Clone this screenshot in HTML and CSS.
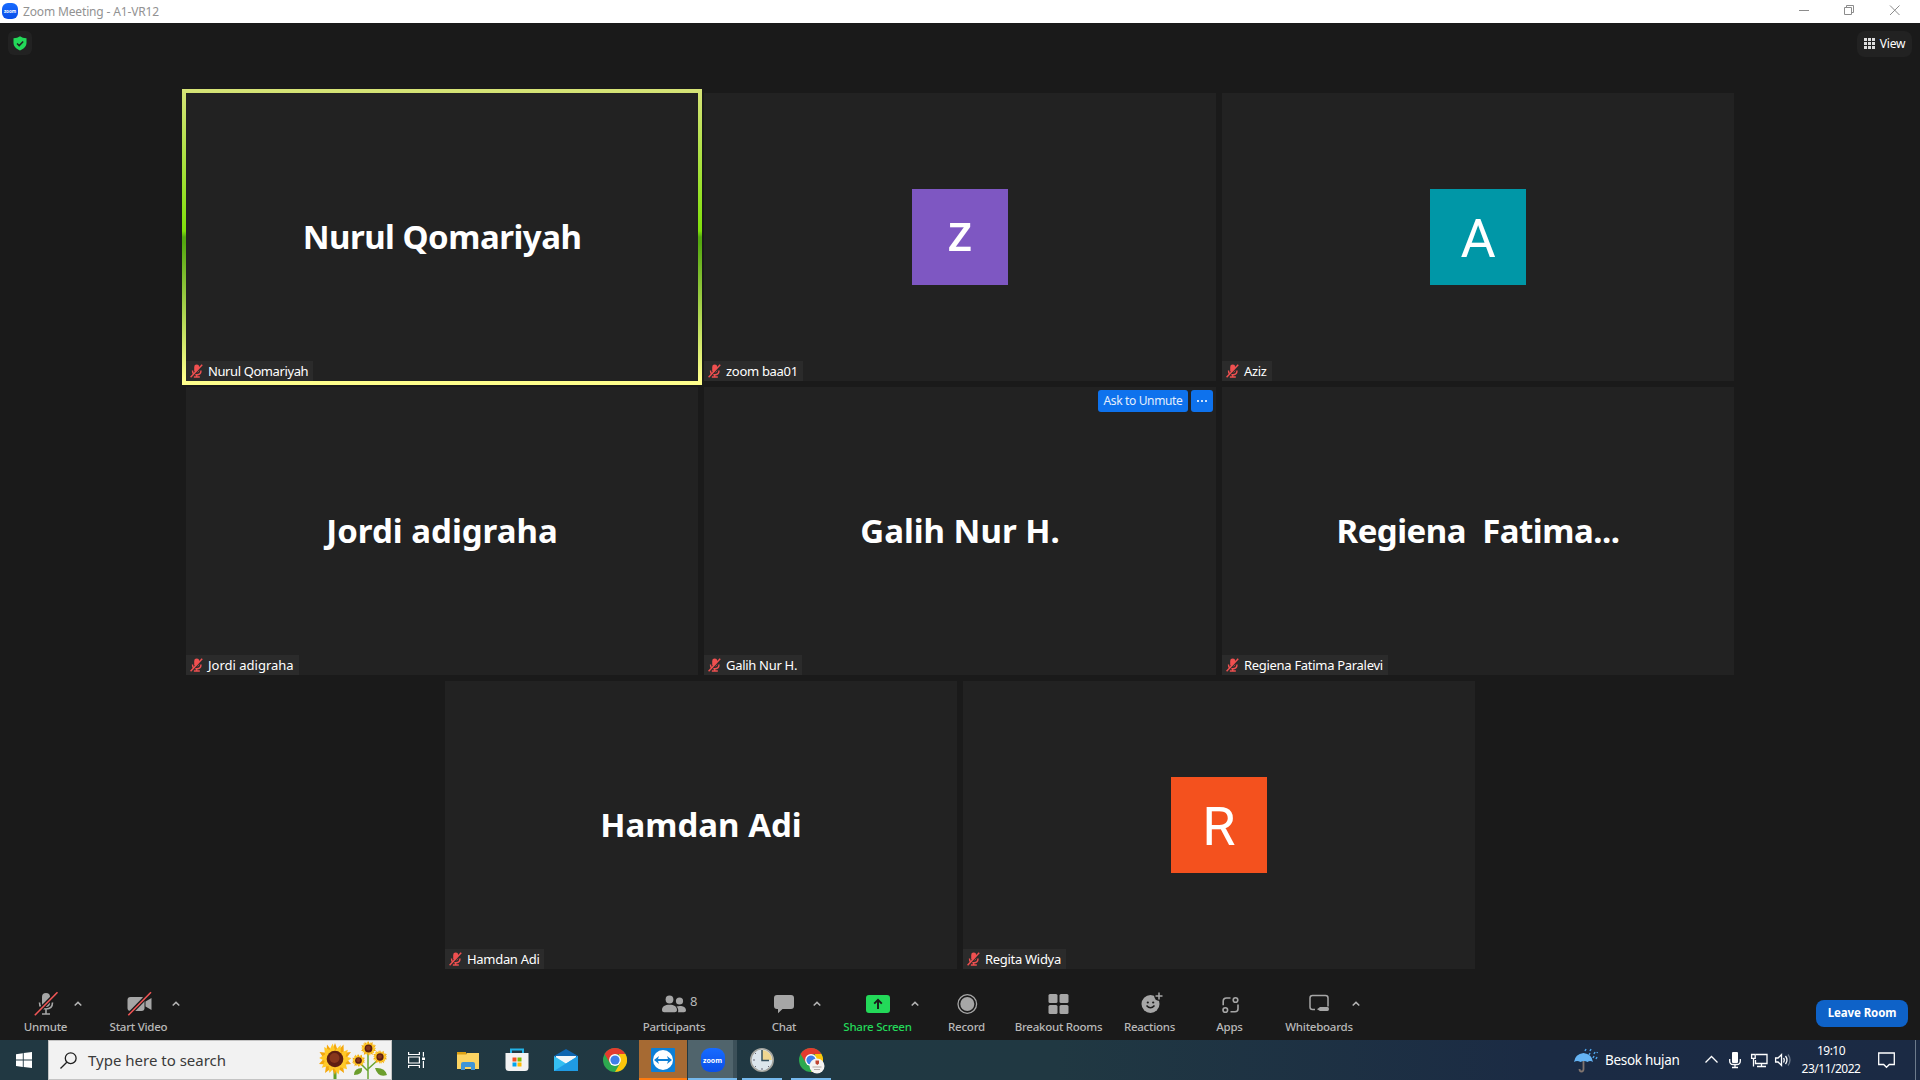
FILE: index.html
```html
<!DOCTYPE html>
<html lang="en">
<head>
    <meta charset="UTF-8">
    <title>Zoom Meeting - A1-VR12</title>
    <link rel="stylesheet" href="styles.css">
</head>
<body>
    <svg width="0" height="0" class="defs">
        <symbol id="mic-off" viewBox="0 0 13 14">
            <rect x="4.2" y=".6" width="5" height="8" rx="2.400" fill="#f05050"/>
            <path d="M2.500 6.500c0 2.900 1.500 4.300 4.200 4.300s4.300-1.400 4.300-4.300M6.700 10.500v2.200M3.800 13h6" fill="none" stroke="#f05050" stroke-width="1.400"/>
            <path d="M1.600 13.500L12.800 1.400" stroke="#2b2b2b" stroke-width="1.400"/>
            <path d="M.6 13.200L12.200.8" stroke="#f05050" stroke-width="1.500"/>
        </symbol>
        <symbol id="caret" viewBox="0 0 16 10">
            <path d="M4.700 6.500L8 3.400l3.300 3.100" fill="none" stroke="#b4b4b4" stroke-width="1.500"/>
        </symbol>
        <symbol id="chrome" viewBox="0 0 24 24">
            <circle cx="12" cy="12" r="12" fill="#2da94f"/>
            <path d="M1.600 6A12 12 0 0 1 22.400 6L12 6.500l-5 8.500z" fill="#e33b2e"/>
            <path d="M22.400 6A12 12 0 0 1 12 24l5.200-9L16 6z" fill="#fdc60b"/>
            <circle cx="12" cy="12" r="5.900" fill="#fff"/>
            <circle cx="12" cy="12" r="4.600" fill="#3f7ee8"/>
        </symbol>
        <symbol id="sunflower" viewBox="0 0 32 32">
            <g fill="#f4a70c">
                <path d="M16 0l3 8 5.500-6.500.3 8.200L32 9l-4.800 6.500L32 21l-8 .8 1 8.200-6.700-5L16 32l-3.300-7L6 30l1.200-8.400L0 21l5-5.500L.5 9l7 .7L8 1.500 13 8z"/>
            </g>
            <path transform="rotate(22 16 16)" fill="#ffc928" d="M16 1l3 7 5.500-5.500.3 7.200L31 9l-3.800 6.500L31 21l-7 .8 1 7.200-6.700-4L16 31l-3.300-6L7 29l.2-7.400L1 21l4-5.500L1.500 9l6 .7L8 2.500 13 8z"/>
            <circle cx="16" cy="16" r="8.300" fill="#5e1f12"/>
            <circle cx="15.500" cy="15" r="5" fill="#87371c"/>
        </symbol>
    </svg>

    <header class="titlebar">
        <span class="app-icon">zoom</span>
        <span class="title">Zoom Meeting - A1-VR12</span>
        <svg class="window-controls" width="120" height="23" fill="none" stroke="#8c8c8c">
            <path d="M7 10.500h10M52.500 7.500h7v7h-7zM54.500 7.500v-2h7v7h-2M98 5.500l9.500 9.500M107.500 5.500L98 15"/>
        </svg>
    </header>

    <main class="meeting">
        <div class="topbar">
            <div class="shield">
                <svg width="14" height="15" viewBox="0 0 14 15"><path d="M7 .3c1.800 1.300 3.800 1.900 6.500 2v4.500c0 3.600-2.500 6.100-6.500 7.700C3 12.900.5 10.400.5 6.800V2.300C3.200 2.200 5.200 1.600 7 .3z" fill="#23d959"/><path d="M4 7.500l2.200 2.100L10.200 5.500" fill="none" stroke="#222" stroke-width="1.500"/></svg>
            </div>
            <div class="view">
                <svg width="11" height="11" fill="#dedede"><path d="M0 0h3v3H0zM4 0h3v3H4zM8 0h3v3H8zM0 4h3v3H0zM4 4h3v3H4zM8 4h3v3H8zM0 8h3v3H0zM4 8h3v3H4zM8 8h3v3H8z"/></svg>
                <span>View</span>
            </div>
        </div>

        <div class="gallery">
            <div class="tile speaking">
                <div class="name tight">Nurul Qomariyah</div>
                <div class="label"><svg width="13" height="14"><use href="#mic-off"/></svg><span class="tight">Nurul Qomariyah</span></div>
            </div>
            <div class="tile">
                <div class="avatar purple">z</div>
                <div class="label"><svg width="13" height="14"><use href="#mic-off"/></svg><span>zoom baa01</span></div>
            </div>
            <div class="tile">
                <div class="avatar teal">A</div>
                <div class="label"><svg width="13" height="14"><use href="#mic-off"/></svg><span>Aziz</span></div>
            </div>
            <div class="tile">
                <div class="name">Jordi adigraha</div>
                <div class="label"><svg width="13" height="14"><use href="#mic-off"/></svg><span class="loose">Jordi adigraha</span></div>
            </div>
            <div class="tile">
                <div class="name">Galih Nur H.</div>
                <div class="actions">
                    <span class="ask">Ask to Unmute</span>
                    <span class="more"><i></i><i></i><i></i></span>
                </div>
                <div class="label"><svg width="13" height="14"><use href="#mic-off"/></svg><span>Galih Nur H.</span></div>
            </div>
            <div class="tile">
                <div class="name tight">Regiena&nbsp; Fatima...</div>
                <div class="label"><svg width="13" height="14"><use href="#mic-off"/></svg><span>Regiena Fatima Paralevi</span></div>
            </div>
            <div class="tile">
                <div class="name">Hamdan Adi</div>
                <div class="label"><svg width="13" height="14"><use href="#mic-off"/></svg><span>Hamdan Adi</span></div>
            </div>
            <div class="tile">
                <div class="avatar orange">R</div>
                <div class="label"><svg width="13" height="14"><use href="#mic-off"/></svg><span>Regita Widya</span></div>
            </div>
        </div>

        <div class="toolbar">
            <div class="tool unmute">
                <svg width="26" height="26" viewBox="0 0 26 26"><rect x="9" y="2" width="8" height="14" rx="4" fill="#a6a6a6"/><path d="M6.500 11.500c0 4.500 2.500 6.500 6.500 6.500s6.500-2 6.500-6.500M13 18v4.500M9 23h8" fill="none" stroke="#a6a6a6" stroke-width="1.600"/><path d="M2 24L24.500 1" stroke="#1a1a1a" stroke-width="4"/><path d="M1.800 24.300L24.500 1.300" stroke="#f05656" stroke-width="1.600"/></svg>
                <span>Unmute</span>
            </div>
            <svg class="caret" width="16" height="10"><use href="#caret"/></svg>
            <div class="tool video">
                <svg width="26" height="26" viewBox="0 0 26 26"><rect x="1.500" y="6" width="17" height="14" rx="3" fill="#a6a6a6"/><path d="M19.500 10.500L25.500 7v12l-6-3.500z" fill="#a6a6a6"/><path d="M2.500 24L25 1" stroke="#1a1a1a" stroke-width="4"/><path d="M2.300 24.300L25 1.300" stroke="#f05656" stroke-width="1.600"/></svg>
                <span>Start Video</span>
            </div>
            <svg class="caret" width="16" height="10"><use href="#caret"/></svg>

            <div class="tool participants">
                <svg width="26" height="26" viewBox="0 0 26 26" fill="#a6a6a6"><circle cx="8.500" cy="8.500" r="3.900"/><circle cx="18.500" cy="10" r="3.600"/><path d="M1 19c0-3.500 3-5.200 7.500-5.200S16 15.500 16 19c0 1.700-1 2.200-2.200 2.200H3.200C2 21.200 1 20.700 1 19zM17 21.200c.6-2.300.2-4.200-1.500-5.800 4-1.200 9.300-.4 9.500 3.800 0 1.300-.8 2-2 2z"/></svg>
                <span class="count">8</span>
                <span>Participants</span>
            </div>
            <div class="tool chat">
                <svg width="26" height="26" viewBox="0 0 26 26"><path d="M6 4h14q3 0 3 3v8q0 3-3 3h-8.500L7 22.300V18H6q-3 0-3-3V7q0-3 3-3z" fill="#a6a6a6"/></svg>
                <span>Chat</span>
            </div>
            <svg class="caret" width="16" height="10"><use href="#caret"/></svg>
            <div class="tool share">
                <svg width="26" height="26" viewBox="0 0 26 26"><rect x="1" y="4" width="24" height="18" rx="3" fill="#23d959"/><path d="M13 18V9.500M9.200 12.700l3.800-3.800 3.800 3.800" fill="none" stroke="#1a1a1a" stroke-width="1.900"/></svg>
                <span>Share Screen</span>
            </div>
            <svg class="caret" width="16" height="10"><use href="#caret"/></svg>
            <div class="tool record">
                <svg width="26" height="26" viewBox="0 0 26 26"><circle cx="13.300" cy="13" r="9.300" fill="none" stroke="#a6a6a6" stroke-width="1.300"/><circle cx="13.300" cy="13" r="7" fill="#a6a6a6"/></svg>
                <span>Record</span>
            </div>
            <div class="tool breakout">
                <svg width="26" height="26" viewBox="0 0 26 26" fill="#a6a6a6"><rect x="2.500" y="3" width="9" height="9" rx="1.500"/><rect x="13.500" y="3" width="9" height="9" rx="1.500"/><rect x="2.500" y="14" width="9" height="9" rx="1.500"/><rect x="13.500" y="14" width="9" height="9" rx="1.500"/></svg>
                <span>Breakout Rooms</span>
            </div>
            <div class="tool reactions">
                <svg width="26" height="26" viewBox="0 0 26 26"><circle cx="13.500" cy="13" r="9" fill="#a6a6a6"/><circle cx="22" cy="5" r="4.800" fill="#1a1a1a"/><path d="M22 1.500v7M18.500 5h7" stroke="#a6a6a6" stroke-width="1.500"/><circle cx="10.800" cy="11.500" r="1.100" fill="#1a1a1a"/><circle cx="16.200" cy="11.500" r="1.100" fill="#1a1a1a"/><path d="M9.500 14.500q4 4.500 8 0" fill="none" stroke="#1a1a1a" stroke-width="1.500"/></svg>
                <span>Reactions</span>
            </div>
            <div class="tool apps">
                <svg width="26" height="26" viewBox="0 0 26 26" fill="none" stroke="#a6a6a6" stroke-width="1.600"><circle cx="18.500" cy="9" r="2.300"/><circle cx="8.300" cy="19" r="2.300"/><path d="M13.500 7H9.500Q6.200 7 6.200 10.300v4M21 13.500v4.200q0 3-3 3h-4.500"/></svg>
                <span>Apps</span>
            </div>
            <div class="tool whiteboards">
                <svg width="26" height="26" viewBox="0 0 26 26"><path d="M9 18.500H6.500q-2.500 0-2.500-2.500V7q0-2.500 2.500-2.500h13Q22 4.500 22 7v8.500" fill="none" stroke="#a6a6a6" stroke-width="1.500"/><path d="M11 18.300l3-2.300h7.500q1.500 0 1.500 2t-1.500 2H14z" fill="#a6a6a6"/></svg>
                <span>Whiteboards</span>
            </div>
            <svg class="caret" width="16" height="10"><use href="#caret"/></svg>
            <div class="leave">Leave Room</div>
        </div>
    </main>

    <footer class="taskbar">
        <div class="start">
            <svg width="16" height="16" fill="#fff"><path d="M0 2.200L6.800 1.200V7.600H0zM7.700 1.100L16 0v7.600H7.700zM0 8.500h6.800v6.400L0 13.900zM7.700 8.500H16V16L7.700 15z"/></svg>
        </div>
        <div class="search">
            <svg width="17" height="17" fill="none" stroke="#1f1f1f" stroke-width="1.300"><circle cx="10.700" cy="6.200" r="5.400"/><path d="M6.800 10.200L.5 16.500"/></svg>
            <span>Type here to search</span>
            <svg class="flowers" width="70" height="38">
                <path d="M17 28v10" stroke="#5f9e28" stroke-width="3"/>
                <path d="M50 10v28M50 30L40 20M50 28L61 18" stroke="#6aa532" stroke-width="1.500" fill="none"/>
                <path d="M36 34q0-7 8-7 1 7-8 7zM57 27q10-1 12 7-9 3-12-7z" fill="#6c9e2d"/>
                <use href="#sunflower" x="1" y="2" width="32" height="32"/>
                <use href="#sunflower" x="43" y="0" width="15" height="15"/>
                <use href="#sunflower" x="34" y="13" width="13" height="13"/>
                <use href="#sunflower" x="55" y="9" width="14" height="14"/>
            </svg>
        </div>
        <div class="task task-view">
            <svg width="17" height="16" fill="none" stroke="#fff" stroke-width="1.200"><path d="M.6 0v2.500h10.800V0M.6 16v-2.500h10.800V16M.6 5h10.800v6H.6zM15.400 0v4.500M15.400 9v7"/><path d="M14 5.500h3v2.500h-3z" fill="#fff" stroke="none"/></svg>
        </div>
        <div class="task">
            <svg width="22" height="19"><path d="M0 1h8l2 2H0z" fill="#d99500"/><path d="M0 1h9v5H0z" fill="#dda012"/><path d="M0 3.500h9l1-1.500h12V18H0z" fill="#fcd462"/><path d="M4 19v-6q0-2 2-2h10q2 0 2 2v6h-4v-3H8v3z" fill="#3f95d8"/></svg>
        </div>
        <div class="task">
            <svg width="24" height="24"><path d="M6 6V1.500h12V6" fill="none" stroke="#22b3e8" stroke-width="2"/><path d="M.5 5h23v14.500q0 3.500-3.500 3.500H4Q.5 23 .5 19.500z" fill="#f2f2f2"/><path d="M7.500 9.500h4v4h-4z" fill="#f25022"/><path d="M12.500 9.500h4v4h-4z" fill="#7fba00"/><path d="M7.500 14.500h4v4h-4z" fill="#00a4ef"/><path d="M12.500 14.500h4v4h-4z" fill="#ffb900"/></svg>
        </div>
        <div class="task">
            <svg width="24" height="24"><path d="M0 8L12 1l12 7v4H0z" fill="#0f65b0"/><path d="M2 8h20v8H2z" fill="#f4f6f8"/><path d="M0 8l12 7.500L24 8v15H0z" fill="#35bff2"/><path d="M0 23l24-15v15z" fill="#1f9be4"/><path d="M2 8h20l-10 7z" fill="#f4f6f8"/></svg>
        </div>
        <div class="task"><svg width="24" height="24"><use href="#chrome"/></svg></div>
        <div class="task alert">
            <svg width="24" height="24"><rect width="24" height="24" rx="1" fill="#0d7fd6"/><circle cx="12" cy="12" r="10" fill="#fff"/><path d="M3 12l5-4-1 3h10l-1-3 5 4-5 4 1-3H7l1 3z" fill="#0d7fd6"/></svg>
        </div>
        <div class="task current"><span class="zoom-icon">zoom</span></div>
        <div class="task open">
            <svg width="24" height="24"><circle cx="12" cy="12" r="11.200" fill="#dce6ec" stroke="#a4a49e" stroke-width="1.600"/><path d="M12 12V2a10 10 0 0 1 10 10z" fill="#efd690"/><path d="M12 2v10.500h7" fill="none" stroke="#34505f" stroke-width="1.500"/><path d="M3 12h2M12 22v-2M5 5l1 1M19 19l-1-1M5 19l1-1" stroke="#667"/></svg>
        </div>
        <div class="task open">
            <svg width="24" height="24" overflow="visible"><use href="#chrome" width="24" height="24"/><circle cx="18" cy="18" r="7.500" fill="#f5f3f1"/><path d="M16.500 12.500h3.500v3l-1.700 1.500-1.800-1.500z" fill="#c0432f"/><path d="M13.500 19h9M15 21.500h6" stroke="#b5aaa5"/></svg>
        </div>

        <div class="tray">
            <svg class="weather" width="24" height="25"><path d="M9.500 8v13q0 2.500-2 2.500T5.500 21" fill="none" stroke="#80746e" stroke-width="1.800"/><path d="M0 14Q1 6 9.500 5 18 6 19 14q-3-2-5.500 0-3.500-2-7 0Q3 12 0 14z" fill="#65b3f3"/><path d="M11 3l1-2M16 3l1-2M15 7l1-2M20 6l1-2M19 10l1-2M23 5l.500-1M22 11l1-2" stroke="#4da2e8" stroke-width="1.500"/></svg>
            <span class="forecast">Besok hujan</span>
            <svg class="tray-icons" width="88" height="20" fill="none" stroke="#fff" stroke-width="1.300">
                <path d="M.5 12.500L6.500 6.500l6 6"/>
                <rect x="27" y="2" width="6" height="11" rx="1" fill="#fff" stroke="none"/><path d="M24.700 9v2q0 3.500 3.500 3.500h3.600q3.500 0 3.500-3.500V9M30 14.500V18M27 17.500h6"/>
                <path d="M51 4.500h11v9H50.500V10M56.500 13.500v3M52 16.500h9M46.600 4.500h3.600v3.800h-3.600zM48.500 8v8.500"/>
                <path d="M70.600 8h2.500l3.400-3.500v11L73.100 12h-2.500zM78.500 8q1.500 2 0 4.500M80.500 6q3 4 0 8"/><path d="M83 4.500q4 5.500 0 11" stroke="#6c7889"/>
            </svg>
            <div class="clock"><span>19:10</span><span class="date">23/11/2022</span></div>
            <svg class="notify" width="17" height="17" fill="none" stroke="#fff" stroke-width="1.300"><path d="M.7 1h15.600v11.500h-5L8.500 15.300l-2.800-2.800h-5z"/></svg>
            <div class="show-desktop"></div>
        </div>
    </footer>
</body>
</html>
```
FILE: styles.css
```css
body {
    margin: 0;
    width: 1920px;
    height: 1080px;
    overflow: hidden;
    display: flex;
    flex-direction: column;
    background: #1a1a1a;
    color: #fff;
    font-family: "Noto Sans", "Open Sans", sans-serif;
    font-size: 12px;
    white-space: nowrap;
}

svg {
    display: block;
    flex: none;
}

.defs {
    position: absolute;
}

/* title bar */
.titlebar {
    height: 23px;
    flex: none;
    display: flex;
    background: #fff;
    color: #929292;
}

.app-icon, .zoom-icon {
    display: flex;
    align-items: center;
    justify-content: center;
    background: linear-gradient(#176bff, #0b4fe8);
    color: #fff;
    font-weight: bold;
}

.app-icon {
    width: 16px;
    height: 16px;
    margin: 3px 5px 0 2px;
    border-radius: 6px;
    font-size: 4.5px;
}

.title {
    line-height: 23px;
    letter-spacing: -0.15px;
}

.window-controls {
    margin-left: auto;
    margin-right: 8px;
}

/* meeting */
.meeting {
    height: 1017px;
    flex: none;
    display: flex;
    flex-direction: column;
}

.topbar {
    height: 62px;
    padding: 8px 8px 0;
    display: flex;
    justify-content: space-between;
    align-items: flex-start;
}

.shield {
    width: 24px;
    height: 24px;
    border-radius: 6px;
    background: #222;
    display: flex;
    align-items: center;
    justify-content: center;
}

.view {
    width: 55px;
    height: 24px;
    padding-bottom: 2px;
    border-radius: 8px;
    background: #222;
    display: flex;
    align-items: center;
    justify-content: center;
    gap: 5px;
}

.view span {
    letter-spacing: -0.2px;
}

.gallery {
    width: 1548px;
    height: 876px;
    margin: 0 auto;
    display: flex;
    flex-wrap: wrap;
    justify-content: center;
    gap: 6px;
}

.tile {
    position: relative;
    width: 512px;
    height: 288px;
    background: #222;
    display: flex;
    align-items: center;
    justify-content: center;
}

.speaking::before {
    content: "";
    position: absolute;
    inset: -4px;
    border: 4px solid;
    border-image: linear-gradient(#d6e377 0%, #80df0c 48%, #55a810 50%, #55a810 52%, #ffff8c 98%) 4;
}

.name {
    margin-bottom: 2px;
    font-size: 33px;
    font-weight: bold;
}

.name.tight {
    letter-spacing: -0.5px;
}

.label {
    position: absolute;
    left: 0;
    bottom: 0;
    height: 20px;
    padding: 0 5px 0 4px;
    display: flex;
    align-items: center;
    gap: 5px;
    background: #2b2b2b;
    font-size: 13px;
    letter-spacing: -0.3px;
}

.label .tight {
    letter-spacing: -0.4px;
}

.label .loose {
    letter-spacing: 0;
}

.avatar {
    width: 96px;
    height: 96px;
    line-height: 100px;
    text-align: center;
    font-family: Roboto, sans-serif;
    font-size: 54px;
}

.purple {
    background: #7e57c2;
    font-family: "Noto Sans", sans-serif;
    font-size: 53px;
    font-weight: 500;
    line-height: 84px;
}

.teal {
    background: #0097a7;
}

.orange {
    background: #f4511e;
}

.actions {
    position: absolute;
    top: 3px;
    right: 3px;
    display: flex;
    gap: 3px;
}

.ask, .more {
    height: 22px;
    border-radius: 3px;
    background: #0e72ed;
    display: flex;
    align-items: center;
    justify-content: center;
}

.ask {
    width: 90px;
    color: #e4eefc;
    line-height: 21px;
    align-items: flex-start;
    letter-spacing: -0.35px;
}

.more {
    width: 22px;
    gap: 2px;
}

.more i {
    width: 2px;
    height: 2px;
    background: #c9dffa;
}

/* toolbar */
.toolbar {
    height: 71px;
    display: flex;
    align-items: flex-start;
    color: #b8b8b8;
}

.tool {
    position: relative;
    padding-top: 22px;
    display: flex;
    flex-direction: column;
    align-items: center;
    font-size: 11.5px;
    font-weight: 500;
    line-height: 20px;
    letter-spacing: -0.25px;
}

.toolbar .caret {
    margin-top: 30px;
}

.unmute { width: 49px; margin-left: 21px; }
.video { width: 59px; margin-left: 23px; }
.participants { width: 70px; margin-left: 455px; }
.chat { width: 50px; margin-left: 50px; }
.share { width: 59px; margin-left: 23px; color: #23d959; }
.record { width: 49px; margin-left: 19px; }
.breakout { width: 101px; margin-left: 17px; }
.reactions { width: 69px; margin-left: 6px; }
.apps { width: 51px; margin-left: 20px; }
.whiteboards { width: 58px; margin-left: 35px; }

.count {
    position: absolute;
    left: 51px;
    top: 22px;
    font-size: 13px;
    font-weight: 400;
}

.leave {
    width: 92px;
    height: 27px;
    line-height: 25px;
    text-align: center;
    margin: 31px 12px 0 auto;
    border-radius: 8px;
    background: #0e62c8;
    color: #fff;
    font-size: 11.5px;
    font-weight: bold;
    letter-spacing: -0.1px;
}

/* windows taskbar */
.taskbar {
    height: 40px;
    flex: none;
    display: flex;
    background: linear-gradient(90deg, #213842, #203842 55%, #1b2b44 80%, #1b2a44);
}

.start {
    width: 48px;
    display: flex;
    align-items: center;
    justify-content: center;
}

.search {
    width: 344px;
    box-sizing: border-box;
    border: 1px solid #c4c4c4;
    padding-left: 11px;
    display: flex;
    align-items: center;
    gap: 11px;
    background: #f2f2f2;
    color: #3a3a3a;
    font-size: 15px;
}

.flowers {
    margin: 0 3px 0 auto;
}

.task {
    position: relative;
    width: 49px;
    display: flex;
    align-items: center;
    justify-content: center;
}

.task-view {
    width: 48px;
    padding-right: 3px;
}

.alert {
    width: 48px;
    margin-right: 1px;
    background: #a66a33;
    box-shadow: inset 0 -2px #ff7b0f;
}

.current {
    background: linear-gradient(90deg, #50646c 45px, #3c5059 45px);
    box-shadow: inset 0 -2px #76b9ed;
}

.open::after {
    content: "";
    position: absolute;
    left: 5px;
    right: 4px;
    bottom: 0;
    height: 2px;
    background: #76b9ed;
}

.zoom-icon {
    width: 24px;
    height: 24px;
    border-radius: 9px;
    font-size: 7px;
}

.tray {
    margin-left: auto;
    display: flex;
    align-items: center;
}

.forecast {
    width: 92px;
    margin-left: 7px;
    font-size: 13.5px;
    letter-spacing: -0.3px;
}

.tray-icons {
    margin-left: 8px;
}

.clock {
    width: 74px;
    padding-left: 1px;
    display: flex;
    flex-direction: column;
    align-items: center;
    line-height: 18px;
    letter-spacing: -0.5px;
}

.notify {
    margin: 0 20px 0 10px;
}

.show-desktop {
    width: 4px;
    height: 40px;
    border-left: 1px solid #6d7b8c;
}
```
